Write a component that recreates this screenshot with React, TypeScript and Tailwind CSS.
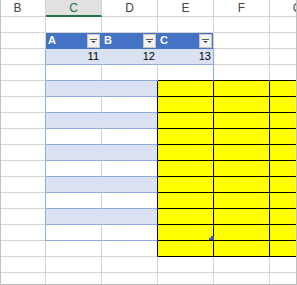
import React from "react";

const COLS = ["B", "C", "D", "E", "F", "G"];
const ROWS = Array.from({ length: 17 }, (_, i) => i + 1);
const HEAD = ["A", "B", "C"];
const VALS = ["11", "12", "13"];

function isBand(r: number) {
  return r === 5 || r === 7 || r === 9 || r === 11 || r === 13;
}
function isYellow(r: number, c: number) {
  return r >= 5 && r <= 15 && c >= 3;
}

function bgClass(r: number, c: number) {
  if (r === 2 && c >= 1 && c <= 3) return "bg-[#4472c4]";
  if (r === 3 && c >= 1 && c <= 3) return "bg-[#d9e1f2]";
  if (isBand(r) && (c === 1 || c === 2)) return "bg-[#d9e1f2]";
  if (isYellow(r, c)) return "bg-[#ffff00]";
  return "bg-white";
}

function borderRClass(r: number, c: number) {
  if (c === 0) return r >= 3 && r <= 14 ? "border-r-[#8ea9db]" : "border-r-[#d4d4d4]";
  if (c === 1) {
    if (r === 2) return "border-r-[#4472c4]";
    if (r === 3 || isBand(r)) return "border-r-[#d9e1f2]";
    return "border-r-[#d4d4d4]";
  }
  if (c === 2) {
    if (r >= 5 && r <= 15) return "border-r-black";
    if (r === 2) return "border-r-[#4472c4]";
    if (r === 3) return "border-r-[#d9e1f2]";
    return "border-r-[#d4d4d4]";
  }
  if (c === 3) {
    if (r >= 5 && r <= 15) return "border-r-black";
    if (r === 3 || r === 4) return "border-r-[#8ea9db]";
    return "border-r-[#d4d4d4]";
  }
  if (r >= 5 && r <= 15) return "border-r-black";
  return "border-r-[#d4d4d4]";
}

function borderBClass(r: number, c: number) {
  if (r === 2 && c >= 1 && c <= 3) return "border-b-[#4472c4]";
  if (r === 3 && c >= 1 && c <= 3) return "border-b-[#8ea9db]";
  if (r === 4 && (c === 1 || c === 2)) return "border-b-[#8ea9db]";
  if (r === 4 && c >= 3) return "border-b-black";
  if (r >= 5 && r <= 14 && (c === 1 || c === 2)) return "border-b-[#8ea9db]";
  if (isYellow(r, c)) return "border-b-black";
  return "border-b-[#d4d4d4]";
}

function FilterButton() {
  return (
    <div className="absolute right-[1px] top-[1px] flex h-[14px] w-[13px] items-center justify-center border border-[#c5c5c5] bg-[#f2f2f2]">
      <svg width="7" height="5" viewBox="0 0 7 5">
        <rect x="0" y="0" width="7" height="1" fill="#555" />
        <polygon points="1.5,2 5.5,2 3.5,4" fill="#333" />
      </svg>
    </div>
  );
}

function Cell({ r, c }: { r: number; c: number }) {
  let content: React.ReactNode = null;
  if (r === 2 && c >= 1 && c <= 3) {
    content = (
      <>
        <span className="pl-[2px] font-bold text-white">{HEAD[c - 1]}</span>
        <FilterButton />
      </>
    );
  } else if (r === 3 && c >= 1 && c <= 3) {
    content = <span className="ml-auto pr-[2px] text-black">{VALS[c - 1]}</span>;
  }
  return (
    <div
      className={`relative flex h-[16px] w-[56px] shrink-0 items-center border-r border-b ${bgClass(r, c)} ${borderRClass(r, c)} ${borderBClass(r, c)}`}
    >
      {content}
    </div>
  );
}

export default function App() {
  return (
    <div className="relative h-[285px] w-[297px] overflow-hidden border-r border-b border-l border-[#c0c0c0] bg-white font-['Liberation_Sans',Arial,sans-serif] text-[11px] leading-none">
      <div className="ml-[-11px] flex flex-col">
        <div className="flex">
          {COLS.map((l, c) =>
            c === 1 ? (
              <div
                key={l}
                className="flex h-[17px] w-[56px] shrink-0 items-center justify-center border-r border-b-2 border-r-[#d4d4d4] border-b-[#217346] bg-[#e1e1e1] pt-[1px] text-[12px] text-[#217346]"
              >
                {l}
              </div>
            ) : (
              <div
                key={l}
                className="flex h-[17px] w-[56px] shrink-0 items-center justify-center border-r border-b border-[#d4d4d4] bg-white text-[12px] text-[#444444]"
              >
                {l}
              </div>
            )
          )}
        </div>
        {ROWS.map((r) => (
          <div key={r} className="flex">
            {COLS.map((l, c) => (
              <Cell key={l} r={r} c={c} />
            ))}
          </div>
        ))}
      </div>
      <div className="absolute left-[210px] top-[236px] h-[3px] w-[3px] bg-[#3b56b8]" />
      <div className="absolute left-[208px] top-[238px] h-[2px] w-[5px] bg-[#3b56b8]" />
    </div>
  );
}
